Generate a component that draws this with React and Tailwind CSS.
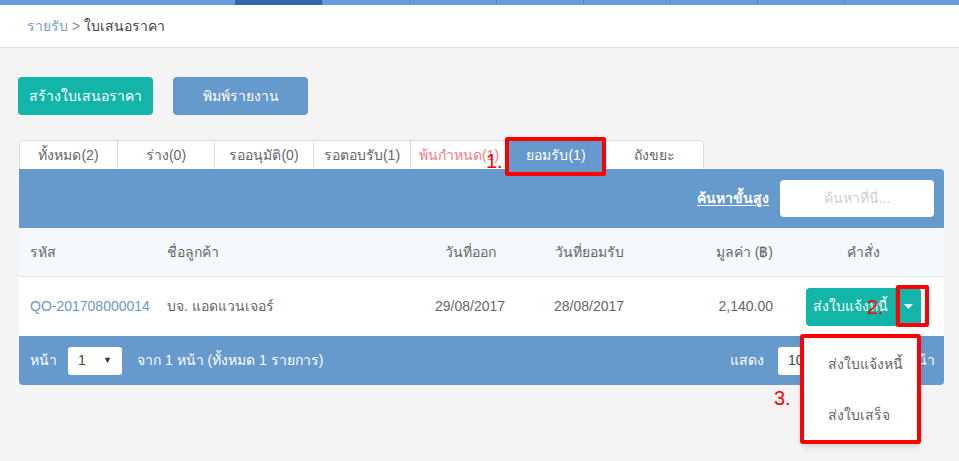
export default function App() {
  const tabs = [
    { label: "ทั้งหมด(2)", w: "w-[97px]" },
    { label: "ร่าง(0)", w: "w-[97px]" },
    { label: "รออนุมัติ(0)", w: "w-[99px]" },
    { label: "รอตอบรับ(1)", w: "w-[97px]" },
    { label: "พ้นกำหนด(1)", w: "w-[97px]", red: true },
    { label: "ยอมรับ(1)", w: "w-[97px]", active: true },
    { label: "ถังขยะ", w: "w-[99px]" },
  ];
  const cols = "grid grid-cols-[137px_255px_118px_120px_134px_161px] items-center";
  return (
    <div className="relative w-[959px] h-[461px] overflow-hidden bg-[#f4f4f4] font-['Liberation_Sans',Tahoma,sans-serif] text-[14px] text-[#666]">
      {/* top nav strip */}
      <div className="flex h-[5px] bg-[#6a9bdc]">
        <div className="w-[235px]" />
        <div className="w-[87px] bg-[#3566aa]" />
        {[0, 1, 2, 3, 4, 5, 6].map((i) => (
          <div key={i} className="w-[87px] border-l border-[#5a8ccf]" />
        ))}
      </div>
      {/* breadcrumb */}
      <div className="h-[43px] bg-white border-b border-[#e2e2e2] flex items-center pl-[27px] text-[14px]">
        <span className="text-[#7d9ec8]">รายรับ</span>
        <span className="text-[#8a8a8a] mx-[4px]">&gt;</span>
        <span className="text-[#444]">ใบเสนอราคา</span>
      </div>

      <div className="pl-[18px] pr-[15px] pt-[29px]">
        {/* action buttons */}
        <div className="flex gap-[20px]">
          <button className="w-[135px] h-[38px] rounded-[4px] bg-[#12b5a8] text-white text-[14px]">สร้างใบเสนอราคา</button>
          <button className="w-[135px] h-[38px] rounded-[4px] bg-[#6699cc] text-white text-[14px]">พิมพ์รายงาน</button>
        </div>

        {/* tabs */}
        <div className="mt-[25px] ml-[1px] flex w-fit h-[29px] bg-white border border-b-0 border-[#dcdcdc] rounded-t-[4px] overflow-hidden">
          {tabs.map((t, i) => (
            <div
              key={i}
              className={`${t.w} h-full flex items-center justify-center ${i > 0 ? "border-l border-[#dcdcdc]" : ""} ${
                t.active ? "bg-[#6699cc] text-white" : t.red ? "text-[#f08080]" : "text-[#666]"
              }`}
            >
              {t.label}
            </div>
          ))}
        </div>

        {/* panel */}
        <div className="ml-[1px] w-[925px] rounded-b-[4px] rounded-tr-[4px] overflow-hidden">
          <div className="h-[59px] bg-[#6699cc] flex items-center justify-end pr-[10px] gap-[11px]">
            <span className="text-white underline font-bold underline-offset-2">ค้นหาขั้นสูง</span>
            <div className="w-[154px] h-[37px] rounded-[4px] bg-white flex items-center justify-center text-[#d0d0d0]">ค้นหาที่นี่...</div>
          </div>
          <div className={`${cols} h-[49px] bg-[#f5f9fd] border-b border-[#e1e6ec] text-[#666]`}>
            <div className="pl-[11px]">รหัส</div>
            <div className="pl-[11px]">ชื่อลูกค้า</div>
            <div className="text-center">วันที่ออก</div>
            <div className="text-center">วันที่ยอมรับ</div>
            <div className="text-right pr-[10px]">มูลค่า (฿)</div>
            <div className="text-center">คำสั่ง</div>
          </div>
          <div className={`${cols} h-[59px] bg-white text-[#666]`}>
            <div className="pl-[11px] text-[#6a98cf] whitespace-nowrap">QO-201708000014</div>
            <div className="pl-[11px]">บจ. แอดแวนเจอร์</div>
            <div className="text-center">29/08/2017</div>
            <div className="text-center">28/08/2017</div>
            <div className="text-right pr-[10px]">2,140.00</div>
            <div className="flex justify-center">
              <div className="flex h-[38px] rounded-[4px] overflow-hidden bg-[#12b5a8] text-white">
                <div className="w-[89px] flex items-center justify-center">ส่งใบแจ้งหนี้</div>
                <div className="w-[26px] flex items-center justify-center border-l border-[#0fa195]">
                  <svg width="9" height="5" viewBox="0 0 9 5"><path d="M0 0h9L4.5 5z" fill="#fff" /></svg>
                </div>
              </div>
            </div>
          </div>
          <div className="h-[49px] bg-[#6699cc] flex items-center text-white pl-[11px] pr-[9px]">
            <span>หน้า</span>
            <div className="ml-[11px] w-[54px] h-[28px] bg-white rounded-[3px] flex items-center justify-between px-[10px] text-[#444]">
              <span>1</span>
              <span className="text-[9px] text-[#333]">▼</span>
            </div>
            <span className="ml-[15px]">จาก 1 หน้า (ทั้งหมด 1 รายการ)</span>
            <span className="ml-auto">แสดง</span>
            <div className="ml-[14px] w-[98px] h-[28px] bg-white rounded-[3px] flex items-center px-[10px] text-[#444]">10</div>
            <span className="ml-[15px]">ต่อหน้า</span>
          </div>
        </div>
      </div>

      {/* annotations */}
      <div className="absolute left-[505px] top-[137px] w-[101px] h-[39px] border-[4px] border-[#ff0000] rounded-[2px]" />
      <div className="absolute left-[486px] top-[150px] text-[20px] leading-[22px] text-[#ff0000]">1.</div>
      <div className="absolute left-[896px] top-[285px] w-[33px] h-[42px] border-[4px] border-[#ff0000] rounded-[2px]" />
      <div className="absolute left-[867px] top-[296px] text-[20px] leading-[22px] text-[#ff0000]">2.</div>
      <div className="absolute left-[774px] top-[387px] text-[20px] leading-[22px] text-[#ff0000]">3.</div>

      {/* dropdown menu */}
      <div className="absolute left-[800px] top-[334px] w-[121px] h-[110px] bg-white border-[4px] border-[#ff0000] rounded-[3px] shadow-md text-[#666]">
        <div className="pl-[24px] pt-[15px] h-[50px] leading-[22px]">ส่งใบแจ้งหนี้</div>
        <div className="pl-[24px] pt-[16px] leading-[22px]">ส่งใบเสร็จ</div>
      </div>
    </div>
  );
}
